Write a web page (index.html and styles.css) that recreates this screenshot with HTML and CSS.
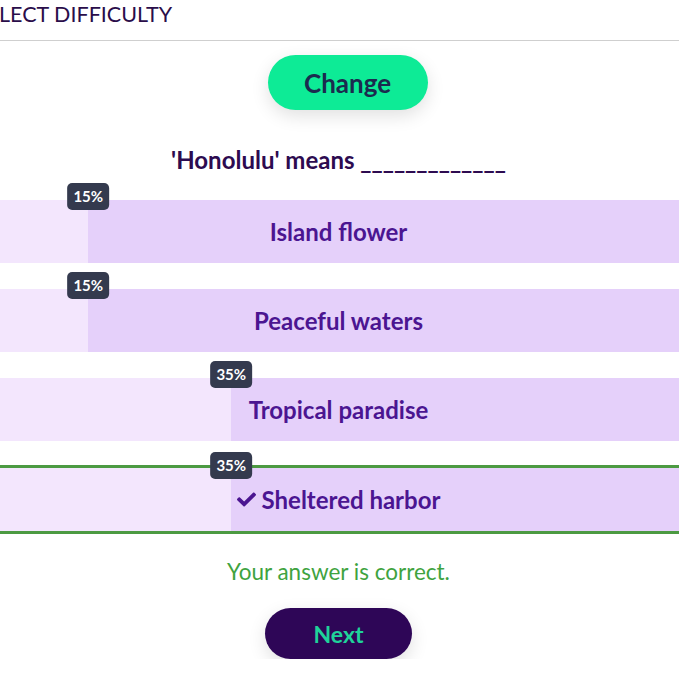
FILE: index.html
```html
<!DOCTYPE html>
<html lang="en">
<head>
    <meta charset="UTF-8">
    <meta name="viewport" content="width=device-width, initial-scale=1.0">
    <title>Quiz</title>
    <link rel="stylesheet" href="styles.css">
</head>
<body>
    <div class="page">
        <header class="top">
            <h2 class="top-title">SELECT DIFFICULTY</h2>
        </header>

        <div class="change-wrap">
            <button class="btn btn-change">Change</button>
        </div>

        <h1 class="question">'Honolulu' means _____________</h1>

        <div class="options">
            <div class="option">
                <div class="option-fill" style="width: 15%"></div>
                <span class="badge" style="left: 15%">15%</span>
                <span class="option-text">Island flower</span>
            </div>
            <div class="option">
                <div class="option-fill" style="width: 15%"></div>
                <span class="badge" style="left: 15%">15%</span>
                <span class="option-text">Peaceful waters</span>
            </div>
            <div class="option">
                <div class="option-fill" style="width: 35%"></div>
                <span class="badge" style="left: 35%">35%</span>
                <span class="option-text">Tropical paradise</span>
            </div>
            <div class="option correct">
                <div class="option-fill" style="width: 35%"></div>
                <span class="badge" style="left: 35%">35%</span>
                <span class="option-text">
                    <svg class="check" viewBox="0 0 512 512"><path d="M173.898 439.404l-166.4-166.4c-9.997-9.997-9.997-26.206 0-36.204l36.203-36.204c9.997-9.998 26.207-9.998 36.204 0L192 312.69 432.095 72.596c9.997-9.997 26.207-9.997 36.204 0l36.203 36.204c9.997 9.997 9.997 26.206 0 36.204l-294.4 294.401c-9.998 9.997-26.207 9.997-36.204-.001z"/></svg>
                    Sheltered harbor
                </span>
            </div>
        </div>

        <p class="result">Your answer is correct.</p>

        <div class="next-wrap">
            <button class="btn btn-next">Next</button>
        </div>
    </div>
</body>
</html>
```

FILE: styles.css
```css
body {
    margin: 0;
    padding: 0;
    overflow: hidden;
    font-family: Lato, "Noto Sans", sans-serif;
    background: #fff;
}

.page {
    width: 715px;
    margin-left: -19px;
}

.top {
    height: 40px;
    border-bottom: 1px solid #cfcfcf;
}

.top-title {
    margin: 0 0 0 -6px;
    font-size: 21.5px;
    font-weight: 400;
    color: #2a0d4a;
    line-height: 28px;
}

.change-wrap {
    display: flex;
    justify-content: center;
    padding: 14px 0 0 18px;
}

.btn {
    border: none;
    border-radius: 30px;
    font-family: inherit;
    font-weight: 700;
    box-shadow: 0 6px 18px rgba(0, 0, 0, 0.12);
}

.btn-change {
    width: 160px;
    height: 55px;
    background: #0deb96;
    color: #1b2b4f;
    font-size: 26px;
}

.question {
    margin: 36px 0 0;
    text-align: center;
    font-size: 24px;
    line-height: 28px;
    color: #2d0b50;
}

.options {
    margin-top: 26px;
    display: flex;
    flex-direction: column;
    gap: 26px;
}

.option {
    position: relative;
    height: 63px;
    background: #e5d0fa;
    display: flex;
    align-items: center;
    justify-content: center;
}

.option.correct {
    border-top: 3px solid #4c9a42;
    border-bottom: 3px solid #4c9a42;
    margin-top: -2px;
}

.option-fill {
    position: absolute;
    left: 0;
    top: 0;
    bottom: 0;
    background: #f3e6fd;
}

.badge {
    position: absolute;
    top: -17px;
    transform: translateX(-50%);
    background: #343a4e;
    color: #fff;
    font-size: 15px;
    font-weight: 700;
    padding: 5px 6px;
    border-radius: 5px;
    line-height: 17px;
}

.option.correct .badge {
    top: -16px;
}

.option-text {
    position: relative;
    font-size: 24px;
    font-weight: 700;
    color: #4b1591;
    display: flex;
    align-items: center;
    gap: 6px;
}

.check {
    width: 19px;
    height: 19px;
    fill: #4b1591;
}

.result {
    margin: 24px 0 0;
    text-align: center;
    font-size: 22.5px;
    color: #3fa33f;
}

.next-wrap {
    display: flex;
    justify-content: center;
    padding-top: 23px;
}

.btn-next {
    width: 147px;
    height: 51px;
    background: #2e0657;
    color: #1fd39a;
    font-size: 23px;
}
```
